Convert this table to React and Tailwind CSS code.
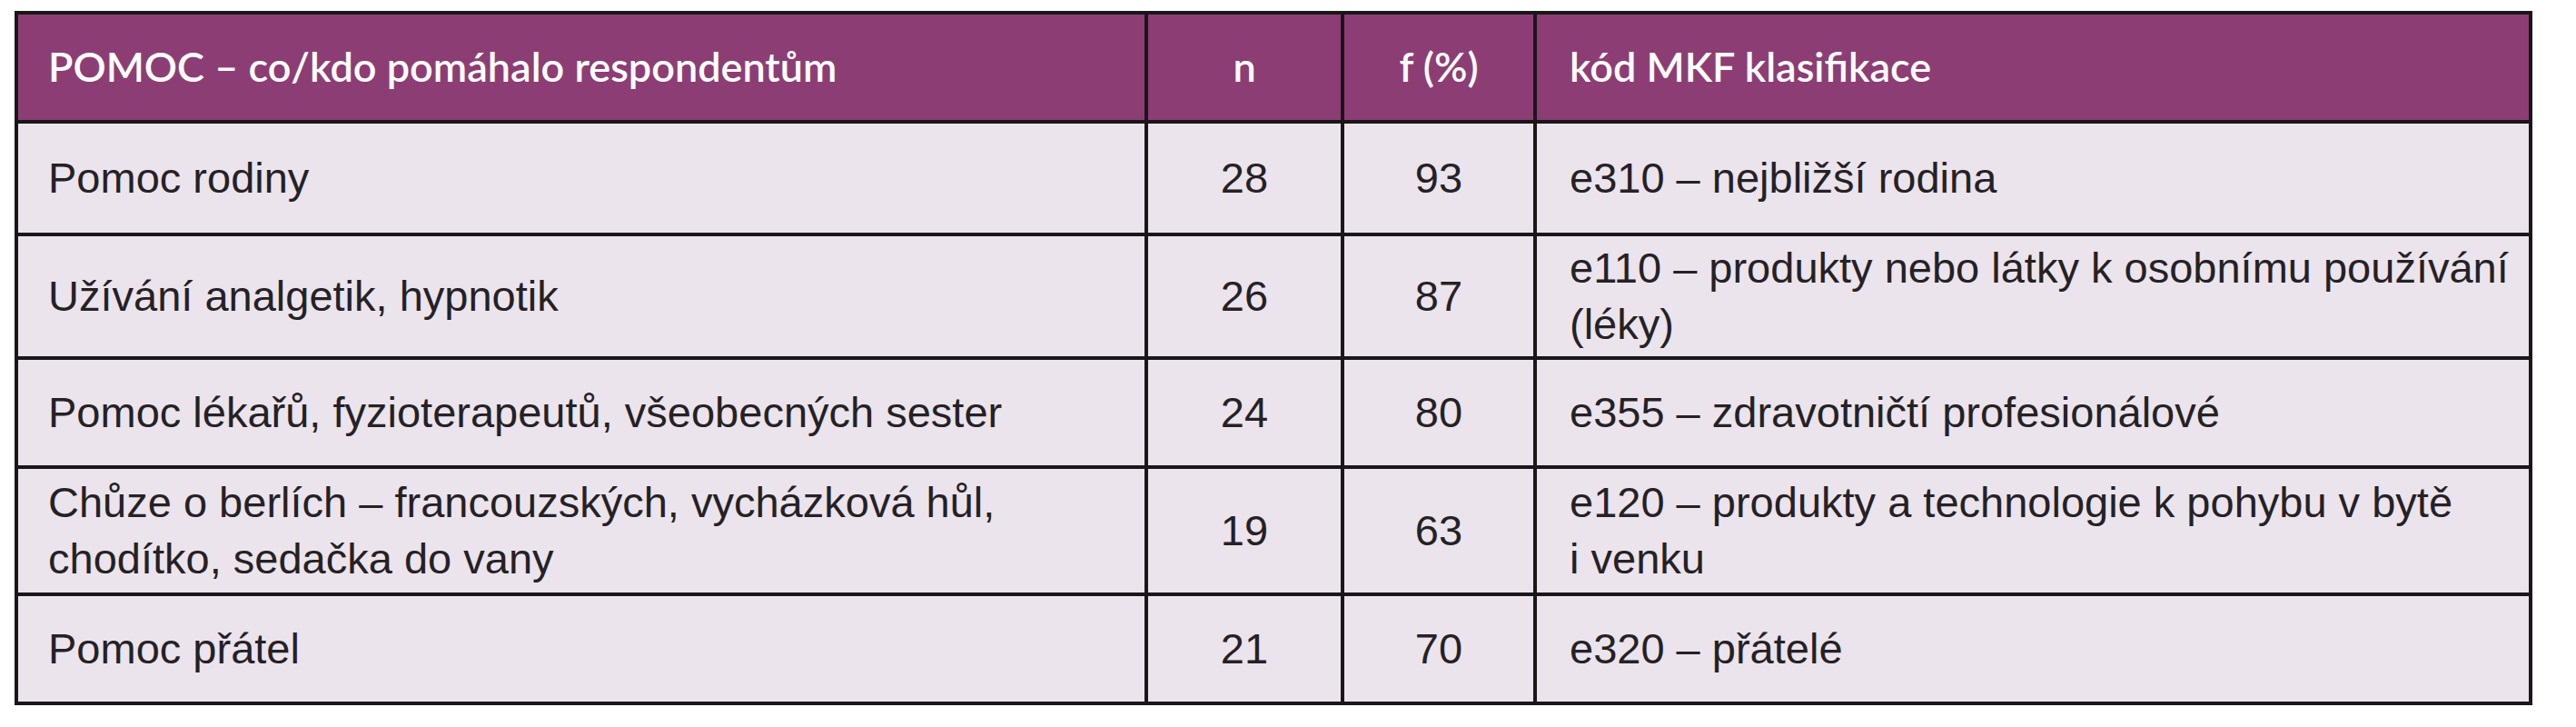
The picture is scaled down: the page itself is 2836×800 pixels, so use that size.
import React from "react";

const ROWS = [
  { help: "Pomoc rodiny", n: "28", f: "93", code: "e310 – nejbližší rodina" },
  {
    help: "Užívání analgetik, hypnotik",
    n: "26",
    f: "87",
    code: "e110 – produkty nebo látky k\u00a0osobnímu používání (léky)",
  },
  {
    help: "Pomoc lékařů, fyzioterapeutů, všeobecných sester",
    n: "24",
    f: "80",
    code: "e355 – zdravotničtí profesionálové",
  },
  {
    help: "Chůze o\u00a0berlích – francouzských, vycházková hůl, chodítko, sedačka do vany",
    n: "19",
    f: "63",
    code: "e120 – produkty a\u00a0technologie k\u00a0pohybu v\u00a0bytě i\u00a0venku",
  },
  { help: "Pomoc přátel", n: "21", f: "70", code: "e320 – přátelé" },
];

const head = "bg-[#8c3e74] text-white font-semibold text-[45px] flex items-center";
const cell = "bg-[#ebe4ec] text-[#252125] text-[47px] leading-[62px] flex items-center";

export default function App() {
  return (
    <div className="w-[2836px] h-[800px] bg-white pt-[12px] pl-[16px]" style={{ fontFamily: '"Liberation Sans", Arial, sans-serif' }}>
      <div className="w-[2772px] grid grid-cols-[1240px_212px_208px_1092px] grid-rows-[116px_120px_132px_116px_136px_116px] gap-[4px] p-[4px] bg-[#1b161a]">
        {/* header row, Lato semibold is closer to the original weight */}
        <div className={`${head} pl-[33px] font-['Lato']`}>POMOC – co/kdo pomáhalo respondentům</div>
        <div className={`${head} justify-center font-['Lato']`}>n</div>
        <div className={`${head} justify-center font-['Lato']`}>f (%)</div>
        <div className={`${head} pl-[36px] font-['Lato']`}>kód MKF klasifikace</div>

        {ROWS.map((r) => (
          <React.Fragment key={r.n + r.f}>
            <div className={`${cell} pl-[33px] pr-[40px]`}>{r.help}</div>
            <div className={`${cell} justify-center`}>{r.n}</div>
            <div className={`${cell} justify-center`}>{r.f}</div>
            <div className={`${cell} pl-[36px] pr-[8px]`}>{r.code}</div>
          </React.Fragment>
        ))}
      </div>
    </div>
  );
}
